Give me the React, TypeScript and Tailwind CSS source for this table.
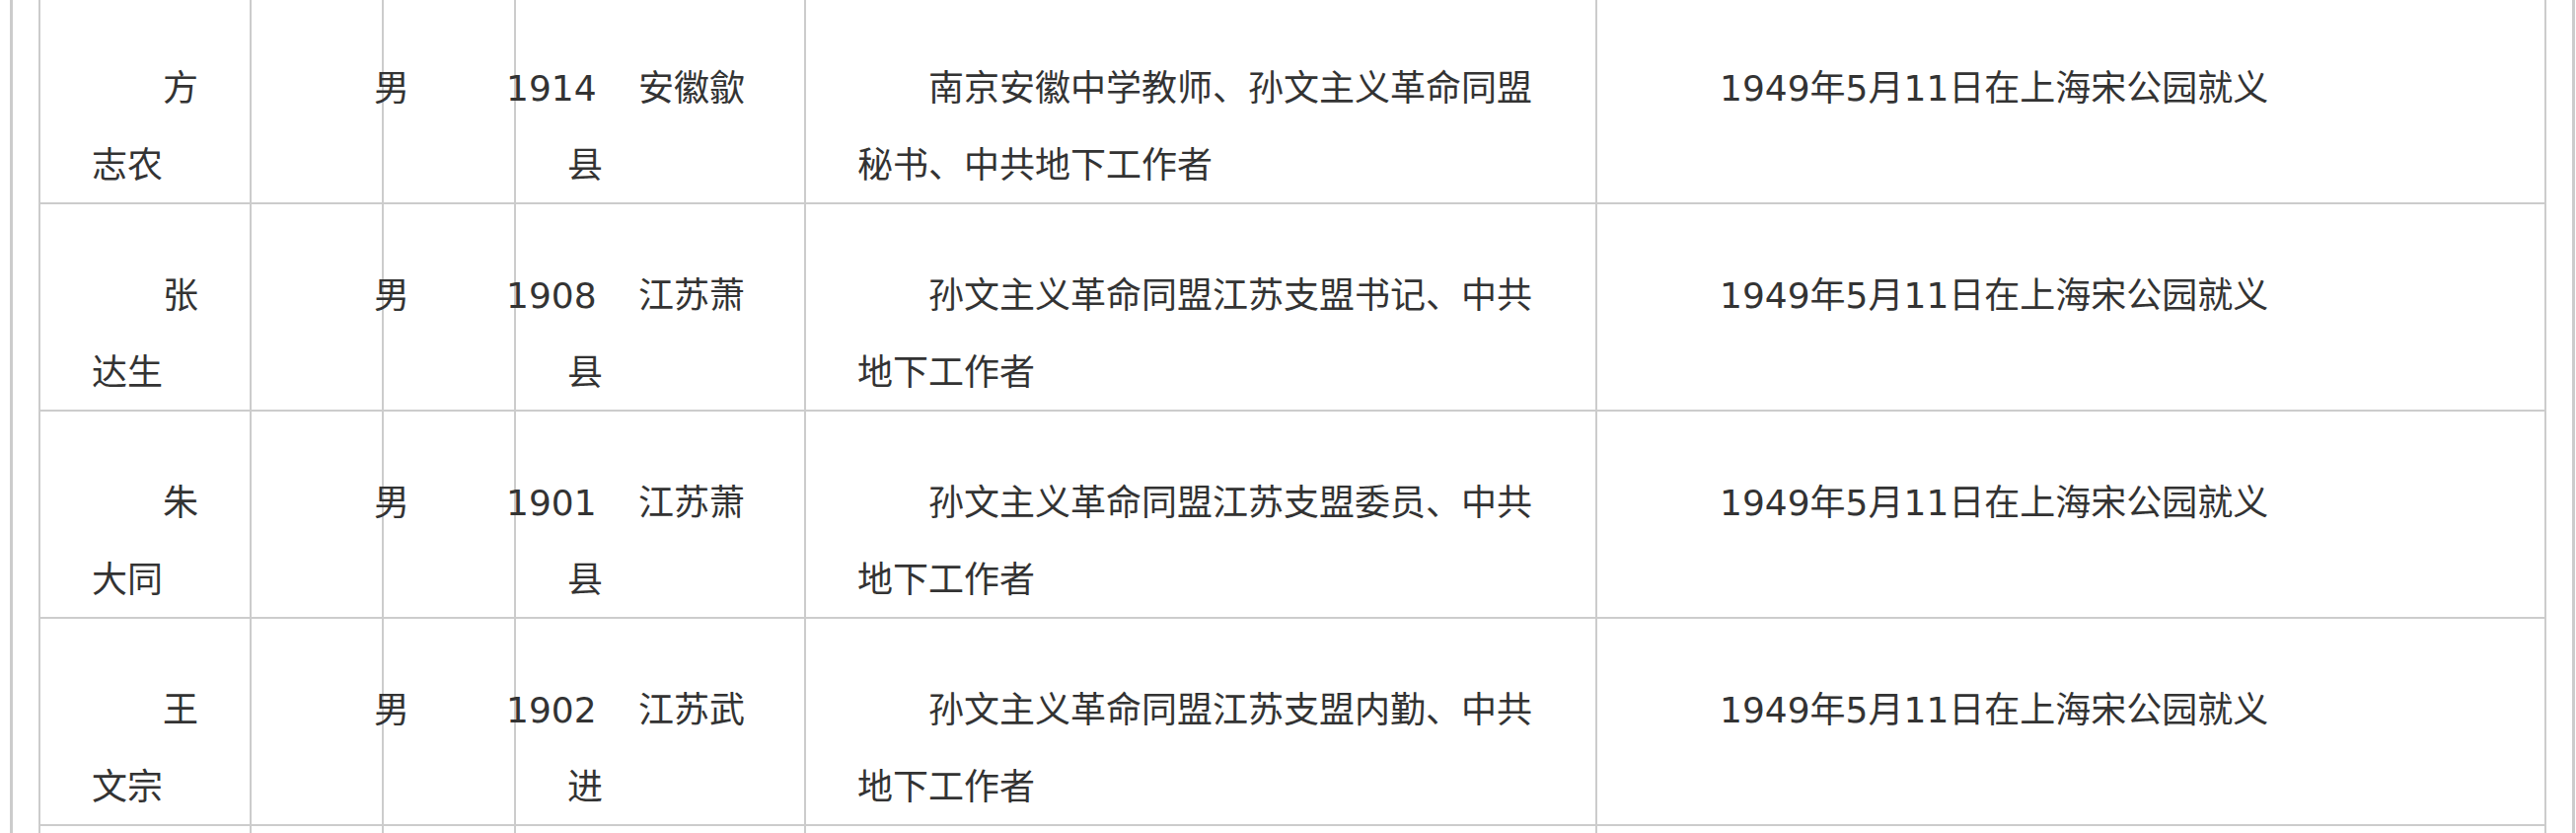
import React from "react";

type Row = {
  name: string;
  sex: string;
  year: string;
  place: string;
  desc: string;
  end: string;
};

const rows: Row[] = [
  {
    name: "方志农",
    sex: "男",
    year: "1914",
    place: "安徽歙县",
    desc: "南京安徽中学教师、孙文主义革命同盟秘书、中共地下工作者",
    end: "1949年5月11日在上海宋公园就义",
  },
  {
    name: "张达生",
    sex: "男",
    year: "1908",
    place: "江苏萧县",
    desc: "孙文主义革命同盟江苏支盟书记、中共地下工作者",
    end: "1949年5月11日在上海宋公园就义",
  },
  {
    name: "朱大同",
    sex: "男",
    year: "1901",
    place: "江苏萧县",
    desc: "孙文主义革命同盟江苏支盟委员、中共地下工作者",
    end: "1949年5月11日在上海宋公园就义",
  },
  {
    name: "王文宗",
    sex: "男",
    year: "1902",
    place: "江苏武进",
    desc: "孙文主义革命同盟江苏支盟内勤、中共地下工作者",
    end: "1949年5月11日在上海宋公园就义",
  },
];

function Cell({ children }: { children?: React.ReactNode }) {
  return (
    <div className="h-[210px] border-r-2 border-b-2 border-[#cccccc] pl-[52px] pr-[44px] pt-[54px] indent-[72px]">
      {children}
    </div>
  );
}

export default function App() {
  return (
    <div className="min-h-screen bg-white overflow-hidden">
      <div className="ml-[10px] w-[2600px] border-x-[3px] border-[#cccccc] px-[26px]">
        <div className="-mt-[5px] grid grid-cols-[214px_134px_134px_294px_802px_962px] border-l-2 border-t-2 border-[#cccccc] font-['DejaVu_Sans','Noto_Sans_CJK_SC',sans-serif] text-[36px] leading-[78px] text-[#333333]">
          {rows.map((r, i) => (
            <React.Fragment key={i}>
              <Cell>{r.name}</Cell>
              <Cell>{r.sex}</Cell>
              <Cell>{r.year}</Cell>
              <Cell>{r.place}</Cell>
              <Cell>{r.desc}</Cell>
              <Cell>{r.end}</Cell>
            </React.Fragment>
          ))}
          <Cell />
          <Cell />
          <Cell />
          <Cell />
          <Cell />
          <Cell />
        </div>
      </div>
    </div>
  );
}
